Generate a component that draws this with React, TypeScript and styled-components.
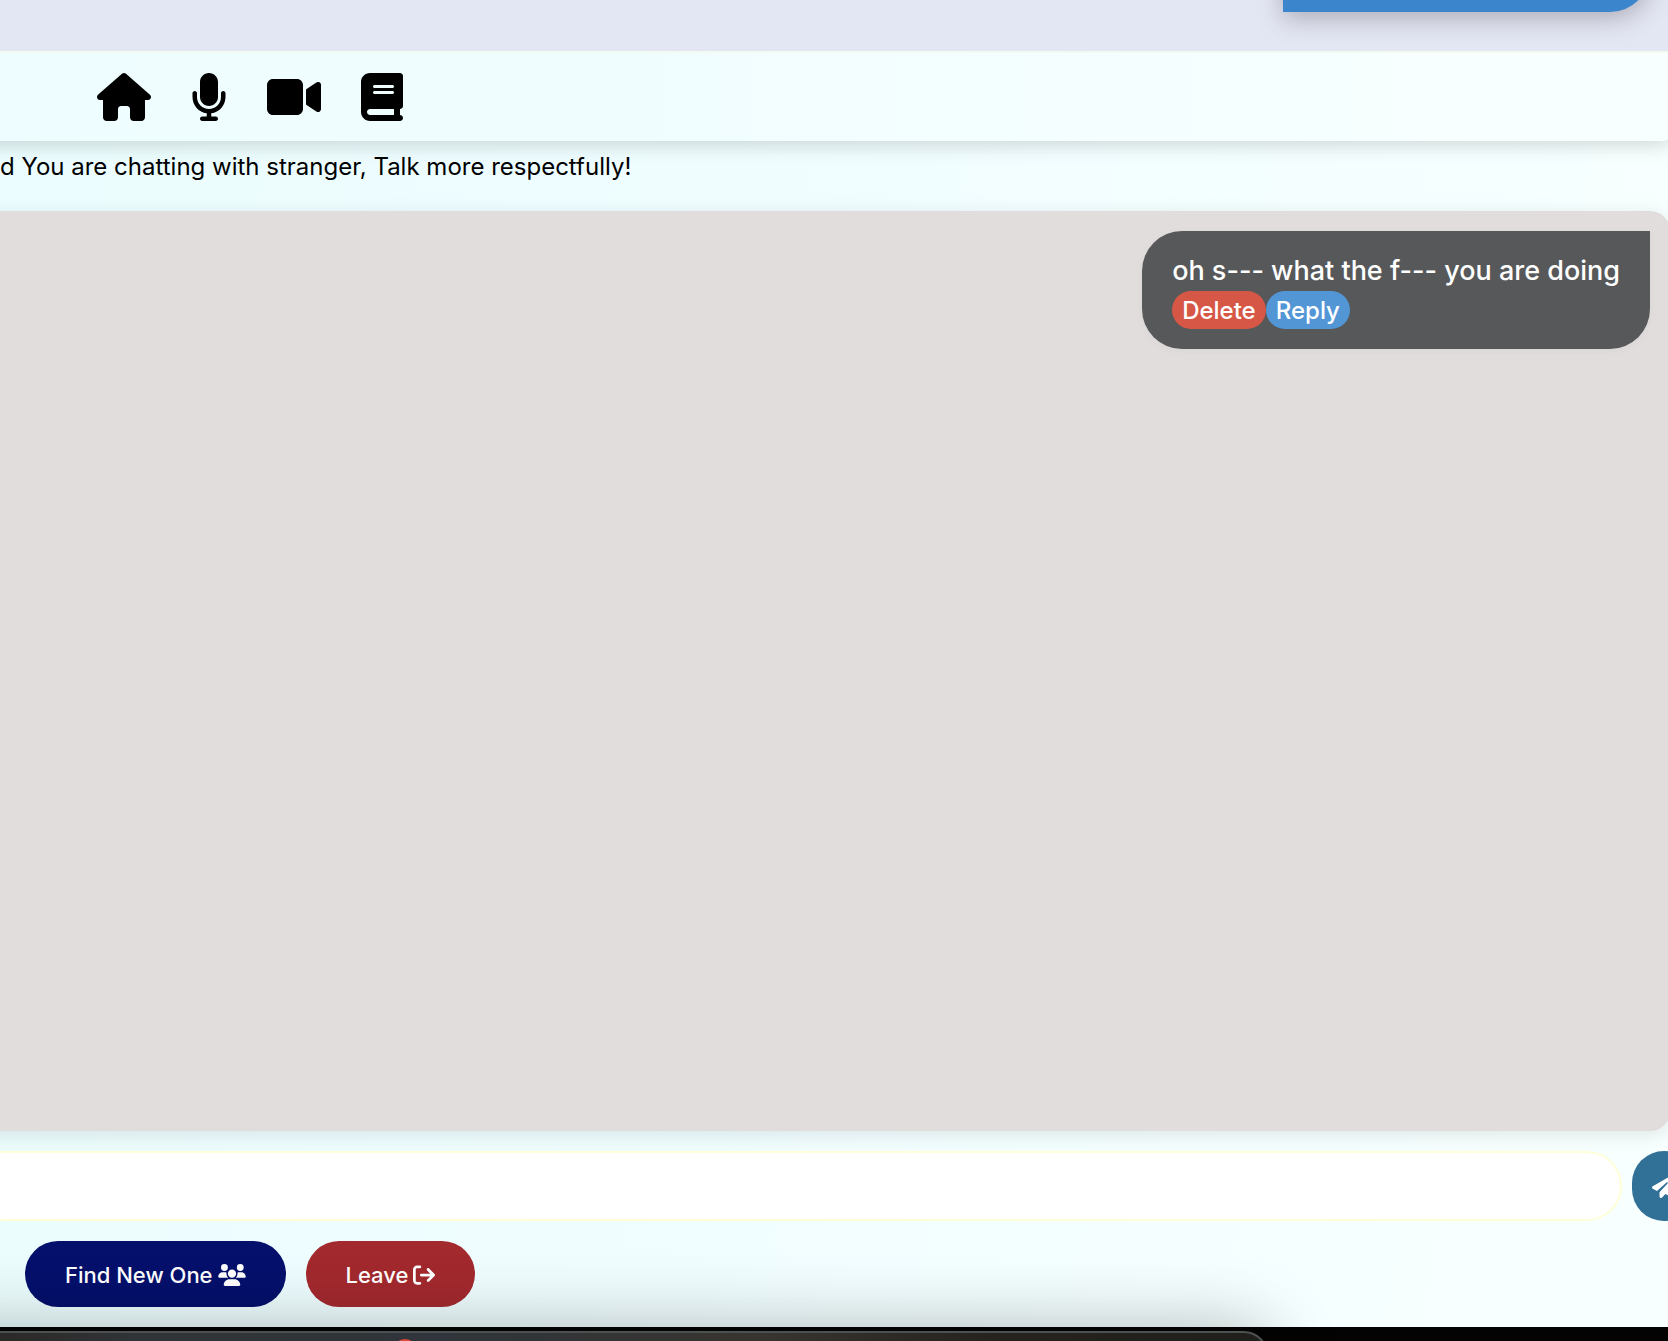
import React, { useState } from "react";
import styled, { createGlobalStyle } from "styled-components";
import {
  FaArrowRightFromBracket,
  FaBook,
  FaHouse,
  FaMicrophone,
  FaPaperPlane,
  FaUsers,
  FaVideo,
} from "react-icons/fa6";

const GlobalStyle = createGlobalStyle`
  *, *::before, *::after { box-sizing: border-box; }
  body {
    margin: 0;
    overflow: hidden;
    background: #000;
    font-family: Inter, "Liberation Sans", sans-serif;
  }
  button, input { font: inherit; }
`;

const Screen = styled.div`
  display: flex;
  flex-direction: column;
  height: 100vh;
  overflow: hidden;
`;

const Preview = styled.div`
  position: relative;
  z-index: 1;
  display: flex;
  flex: none;
  justify-content: flex-end;
  align-items: flex-end;
  height: 51px;
  padding: 0 18px 39px 0;
  overflow: hidden;
  background: #e3e6f3;
`;

const PreviewBubble = styled.div`
  flex: none;
  width: 367px;
  height: 80px;
  border-radius: 40px 40px 40px 0;
  background: #3a85cb;
  box-shadow: 0 6px 24px rgba(70, 60, 70, 0.34);
`;

const Page = styled.main`
  display: flex;
  flex: 1;
  flex-direction: column;
  min-height: 0;
  background: linear-gradient(100deg, #ebfdfe 0%, #effdff 40%, #f6ffff 80%, #f8ffff 100%);
`;

const Header = styled.header`
  flex: none;
  height: 90px;
  margin: 0 -4px 0 -40px;
  padding: 20px 137px;
  border-top: 2px solid #f3faf2;
  border-radius: 0 0 10px 0;
  background: linear-gradient(90deg, #eefdff 0%, #f0fdff 40%, #f6ffff 75%, #f8ffff 100%);
  box-shadow: 0 4px 20px rgba(0, 0, 0, 0.16);
`;

const Nav = styled.nav`
  display: flex;
  gap: 40px;
`;

const NavLink = styled.a<{ $width: number }>`
  display: flex;
  color: #000;

  svg {
    width: ${(p) => p.$width}px;
    height: 48px;
  }
`;

const Notice = styled.p`
  flex: none;
  margin: 0;
  padding: 10px 0 28px;
  font-size: 24px;
  line-height: 32px;
  white-space: nowrap;
`;

const Conversation = styled.section`
  display: flex;
  flex: 1;
  flex-direction: column;
  align-items: flex-end;
  min-height: 0;
  margin: 0 -2px 0 -40px;
  padding: 20px;
  border-radius: 20px;
  background: #e1dddc;
  box-shadow: 0 4px 20px rgba(0, 0, 0, 0.1);
`;

const Message = styled.article`
  padding: 20px 30px;
  border-radius: 40px 0 40px 40px;
  background: #57585a;
  box-shadow: 0 2px 10px rgba(0, 0, 0, 0.03);
  color: #fff;
  font-weight: 500;
`;

const MessageText = styled.p`
  margin: 0;
  font-size: 27px;
  line-height: 40px;
  white-space: nowrap;
`;

const MessageActions = styled.div`
  display: flex;
`;

const Pill = styled.button<{ $color: string }>`
  height: 38px;
  padding: 0 10px;
  border: 0;
  border-radius: 20px;
  background: ${(p) => p.$color};
  color: #fff;
  font-size: 24px;
  line-height: 40px;
`;

const Composer = styled.form`
  display: flex;
  flex: none;
  gap: 10px;
  height: 70px;
  margin: 20px -28px 20px 0;
`;

const MessageInput = styled.input`
  flex: 1;
  min-width: 0;
  padding: 0 30px;
  border: 2px solid #ffffd8;
  border-left: 0;
  border-radius: 0 35px 35px 0;
  outline: 0;
  background: #fff;
  font-size: 24px;
`;

const SendButton = styled.button`
  display: flex;
  flex: none;
  align-items: center;
  padding: 0 20px;
  border: 0;
  border-radius: 50px;
  background: #317197;
  color: #fff;
  font-size: 24px;
`;

const Controls = styled.div`
  display: flex;
  flex: none;
  gap: 20px;
  padding: 0 25px 20px;
`;

const ControlButton = styled.button<{ $color: string; $iconWidth: number }>`
  display: flex;
  align-items: center;
  gap: 5px;
  height: 66px;
  padding: 2px 40px 0;
  border: 0;
  border-radius: 33px;
  background: ${(p) => p.$color};
  color: #fff;
  font-size: 22px;
  font-weight: 500;
  white-space: nowrap;

  svg {
    width: ${(p) => p.$iconWidth}px;
    height: 22px;
  }
`;

const Desktop = styled.footer`
  position: relative;
  flex: none;
  height: 14px;
  padding-top: 4px;
  background: #040303;
`;

const Dock = styled.div`
  position: relative;
  width: calc(76% + 100px);
  height: 80px;
  margin-left: -100px;
  border-top: 2px solid #4d5050;
  border-right: 2px solid #4d5050;
  border-radius: 0 24px 0 0;
  background: linear-gradient(90deg, #2c2a28 8%, #303438 18%, #2f353a 40%, #38342f 63%, #26231e 80%, #201f1b 100%);
  box-shadow: 0 0 72px rgba(0, 0, 0, 0.3);
`;

const Badge = styled.span`
  position: absolute;
  top: 6px;
  left: 493px;
  width: 24px;
  height: 24px;
  border-radius: 50%;
  background: #d9483b;
`;

export default function App() {
  const [draft, setDraft] = useState("");

  return (
    <Screen>
      <GlobalStyle />
      <Preview>
        <PreviewBubble />
      </Preview>
      <Page>
        <Header>
          <Nav aria-label="Main">
            <NavLink href="#home" aria-label="Home" $width={54}><FaHouse /></NavLink>
            <NavLink href="#voice" aria-label="Voice" $width={36}><FaMicrophone /></NavLink>
            <NavLink href="#video" aria-label="Video" $width={54}><FaVideo /></NavLink>
            <NavLink href="#guide" aria-label="Guide" $width={42}><FaBook /></NavLink>
          </Nav>
        </Header>
        <Notice>d You are chatting with stranger, Talk more respectfully!</Notice>
        <Conversation aria-label="Conversation">
          <Message>
            <MessageText>oh s--- what the f--- you are doing</MessageText>
            <MessageActions>
              <Pill type="button" $color="#d65745">Delete</Pill>
              <Pill type="button" $color="#5296d6">Reply</Pill>
            </MessageActions>
          </Message>
        </Conversation>
        <Composer onSubmit={(e) => e.preventDefault()}>
          <MessageInput
            aria-label="Message"
            value={draft}
            onChange={(e) => setDraft(e.target.value)}
          />
          <SendButton type="submit" aria-label="Send"><FaPaperPlane /></SendButton>
        </Composer>
        <Controls>
          <ControlButton type="button" $color="#04106b" $iconWidth={28}>
            Find New One <FaUsers />
          </ControlButton>
          <ControlButton type="button" $color="#a2292e" $iconWidth={22}>
            Leave <FaArrowRightFromBracket />
          </ControlButton>
        </Controls>
      </Page>
      <Desktop>
        <Dock>
          <Badge />
        </Dock>
      </Desktop>
    </Screen>
  );
}
